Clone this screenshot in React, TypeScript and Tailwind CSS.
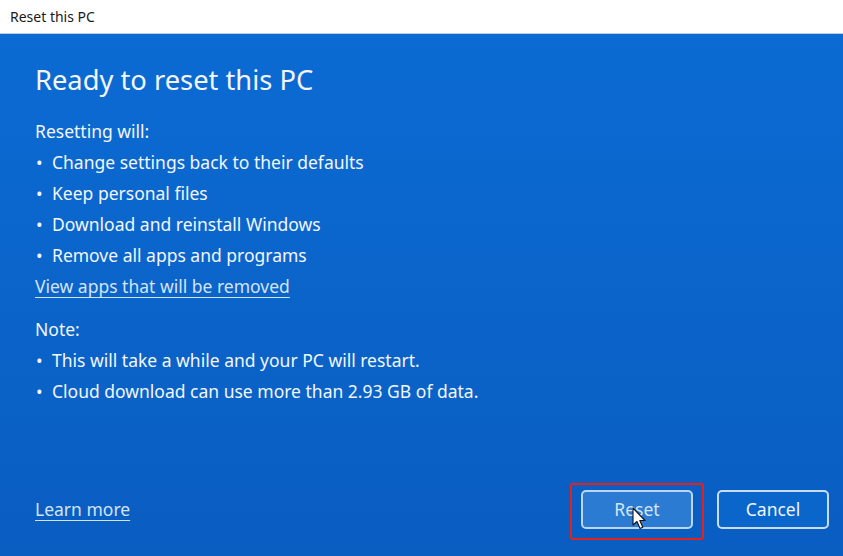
export default function App() {
  const resetItems = [
    'Change settings back to their defaults',
    'Keep personal files',
    'Download and reinstall Windows',
    'Remove all apps and programs',
  ];
  const noteItems = [
    'This will take a while and your PC will restart.',
    'Cloud download can use more than 2.93 GB of data.',
  ];

  return (
    <div className="w-[843px] h-[556px] flex flex-col overflow-hidden bg-white font-['Noto_Sans',sans-serif]">
      {/* title bar */}
      <div className="h-[34px] shrink-0 flex items-center pl-[10px] text-[14px] text-[#1a1a1a] bg-white border-b border-[#b9cfe6]">
        Reset this PC
      </div>

      {/* body */}
      <div className="flex-1 flex flex-col bg-gradient-to-b from-[#0b6bd3] to-[#0a5dc1] text-[#f2f6fb] px-[35px]">
        <h1 className="mt-[28px] text-[27.3px] leading-[36px] font-normal">Ready to reset this PC</h1>

        <div className="mt-[18px] text-[17.5px] leading-[31px]">
          <p>Resetting will:</p>
          <ul>
            {resetItems.map((t) => (
              <li key={t} className="flex">
                <span className="w-[17px] shrink-0 pl-[1px]">•</span>
                <span>{t}</span>
              </li>
            ))}
          </ul>
          <a className="underline underline-offset-[4px] decoration-1 text-[#d3e3f6]">
            View apps that will be removed
          </a>

          <p className="mt-[12px]">Note:</p>
          <ul>
            {noteItems.map((t) => (
              <li key={t} className="flex">
                <span className="w-[17px] shrink-0 pl-[1px]">•</span>
                <span>{t}</span>
              </li>
            ))}
          </ul>
        </div>

        {/* footer */}
        <div className="mt-auto mb-[16px] flex items-start">
          <a className="mt-[14px] text-[17.5px] leading-[24px] underline underline-offset-[4px] decoration-1 text-[#d3e3f6]">
            Learn more
          </a>
          <div className="ml-auto flex items-start gap-[13px] mr-[-21px]">
            <div className="relative px-[9px] pt-[5px] pb-[9px] border-2 border-[#e8201a] rounded-[3px]">
              <button className="w-[112px] h-[39px] rounded-[5px] border-2 border-[#bcd6f2] bg-[#2b7bd2] text-[17.5px] text-[#d6e5f6]">
                Reset
              </button>
              <svg
                className="absolute left-[60px] top-[22px]"
                width="16"
                height="24"
                viewBox="0 0 16 24"
              >
                <path
                  d="M1 1 L1 18 L5 14.5 L8 21.5 L10.8 20.3 L7.8 13.5 L13 13.5 Z"
                  fill="#ffffff"
                  stroke="#111"
                  strokeWidth="1.1"
                  strokeLinejoin="round"
                />
              </svg>
            </div>
            <button className="mt-[7px] w-[112px] h-[39px] rounded-[5px] border-2 border-[#c8ddf3] bg-[#0b66cb] text-[17.5px] text-[#eef4fb]">
              Cancel
            </button>
          </div>
        </div>
      </div>
    </div>
  );
}
